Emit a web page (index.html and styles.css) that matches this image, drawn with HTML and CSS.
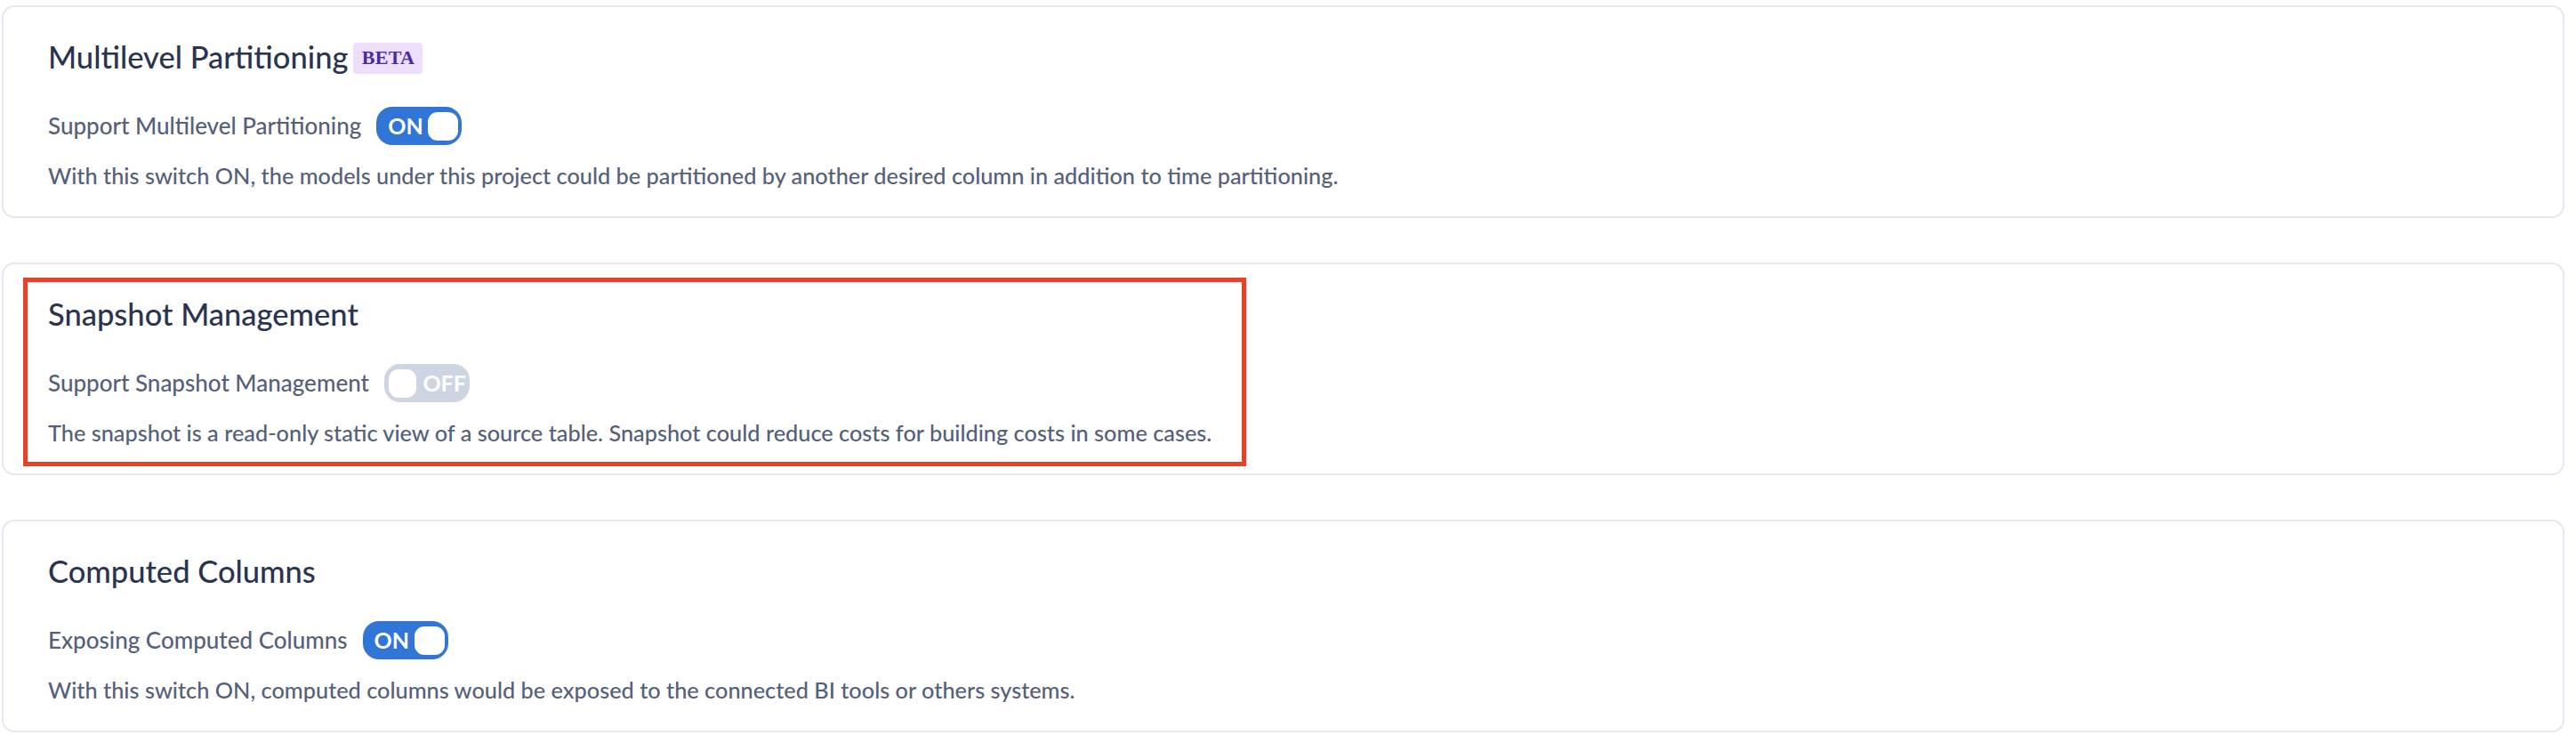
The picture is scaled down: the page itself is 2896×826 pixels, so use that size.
FILE: index.html
```html
<!DOCTYPE html>
<html lang="en">
<head>
<meta charset="utf-8">
<title>Project settings</title>
<link rel="stylesheet" href="styles.css">
</head>
<body>
<main class="settings">
  <section class="card">
    <h2 class="card-title">Multilevel Partitioning <span class="badge">BETA</span></h2>
    <div class="setting-row">
      <span class="setting-label">Support Multilevel Partitioning</span>
      <span class="switch switch-on"><span class="switch-text">ON</span><span class="switch-knob"></span></span>
    </div>
    <p class="setting-desc">With this switch ON, the models under this project could be partitioned by another desired column in addition to time partitioning.</p>
  </section>

  <section class="card card-marked">
    <div class="highlight-box"></div>
    <h2 class="card-title">Snapshot Management</h2>
    <div class="setting-row">
      <span class="setting-label">Support Snapshot Management</span>
      <span class="switch switch-off"><span class="switch-knob"></span><span class="switch-text">OFF</span></span>
    </div>
    <p class="setting-desc">The snapshot is a read-only static view of a source table. Snapshot could reduce costs for building costs in some cases.</p>
  </section>

  <section class="card">
    <h2 class="card-title">Computed Columns</h2>
    <div class="setting-row">
      <span class="setting-label">Exposing Computed Columns</span>
      <span class="switch switch-on"><span class="switch-text">ON</span><span class="switch-knob"></span></span>
    </div>
    <p class="setting-desc">With this switch ON, computed columns would be exposed to the connected BI tools or others systems.</p>
  </section>
</main>
</body>
</html>
```
FILE: styles.css
```css
* { box-sizing: border-box; }

html, body {
  margin: 0;
  padding: 0;
  background: #ffffff;
}

body {
  font-family: "Lato", "Roboto", "Liberation Sans", sans-serif;
  color: #55607a;
}

.settings {
  width: 2881px;
  margin-left: 2px;
  padding-top: 6px;
  display: flex;
  flex-direction: column;
  gap: 50px;
}

.card {
  position: relative;
  height: 239px;
  border: 2px solid #e4e8f1;
  border-radius: 14px;
  background: #ffffff;
  padding: 34px 48px 0 50px;
}

.card-title {
  margin: 0 0 34px;
  height: 44px;
  display: flex;
  align-items: center;
  font-size: 34.5px;
  line-height: 44px;
  font-weight: 500;
  color: #2a3450;
}

.badge {
  display: inline-flex;
  align-items: center;
  justify-content: center;
  width: 78px;
  height: 35px;
  margin-left: 6px;
  margin-top: 2px;
  border-radius: 4px;
  background: #ecdefc;
  color: #4b2a9f;
  font-family: "Liberation Serif", "Times New Roman", serif;
  font-weight: 700;
  font-size: 22px;
  letter-spacing: 0.3px;
}

.setting-row {
  display: flex;
  align-items: center;
  height: 43px;
  margin-bottom: 16px;
}

.setting-label {
  font-size: 26px;
  line-height: 43px;
  font-weight: 500;
  color: #55607a;
  margin-right: 17px;
}

.switch {
  position: relative;
  display: inline-flex;
  align-items: center;
  width: 96px;
  height: 43px;
  border-radius: 18px;
  padding: 0 4px;
}

.switch-on {
  background: #3176d6;
  justify-content: space-between;
  padding-left: 13px;
}

.switch-off {
  background: #cdd5e3;
  gap: 7px;
  padding-left: 5px;
}

.switch-knob {
  width: 34px;
  height: 32px;
  border-radius: 11px;
  background: #ffffff;
  margin-top: 1px;
}

.switch-text {
  color: #ffffff;
  font-weight: 700;
  font-size: 25px;
  line-height: 43px;
}

.setting-desc {
  margin: 0;
  font-size: 25.3px;
  line-height: 36px;
  font-weight: 500;
  color: #55607a;
}

.highlight-box {
  position: absolute;
  left: 22px;
  top: 15px;
  width: 1375px;
  height: 212px;
  border: 5px solid #e8412a;
  pointer-events: none;
}
```
